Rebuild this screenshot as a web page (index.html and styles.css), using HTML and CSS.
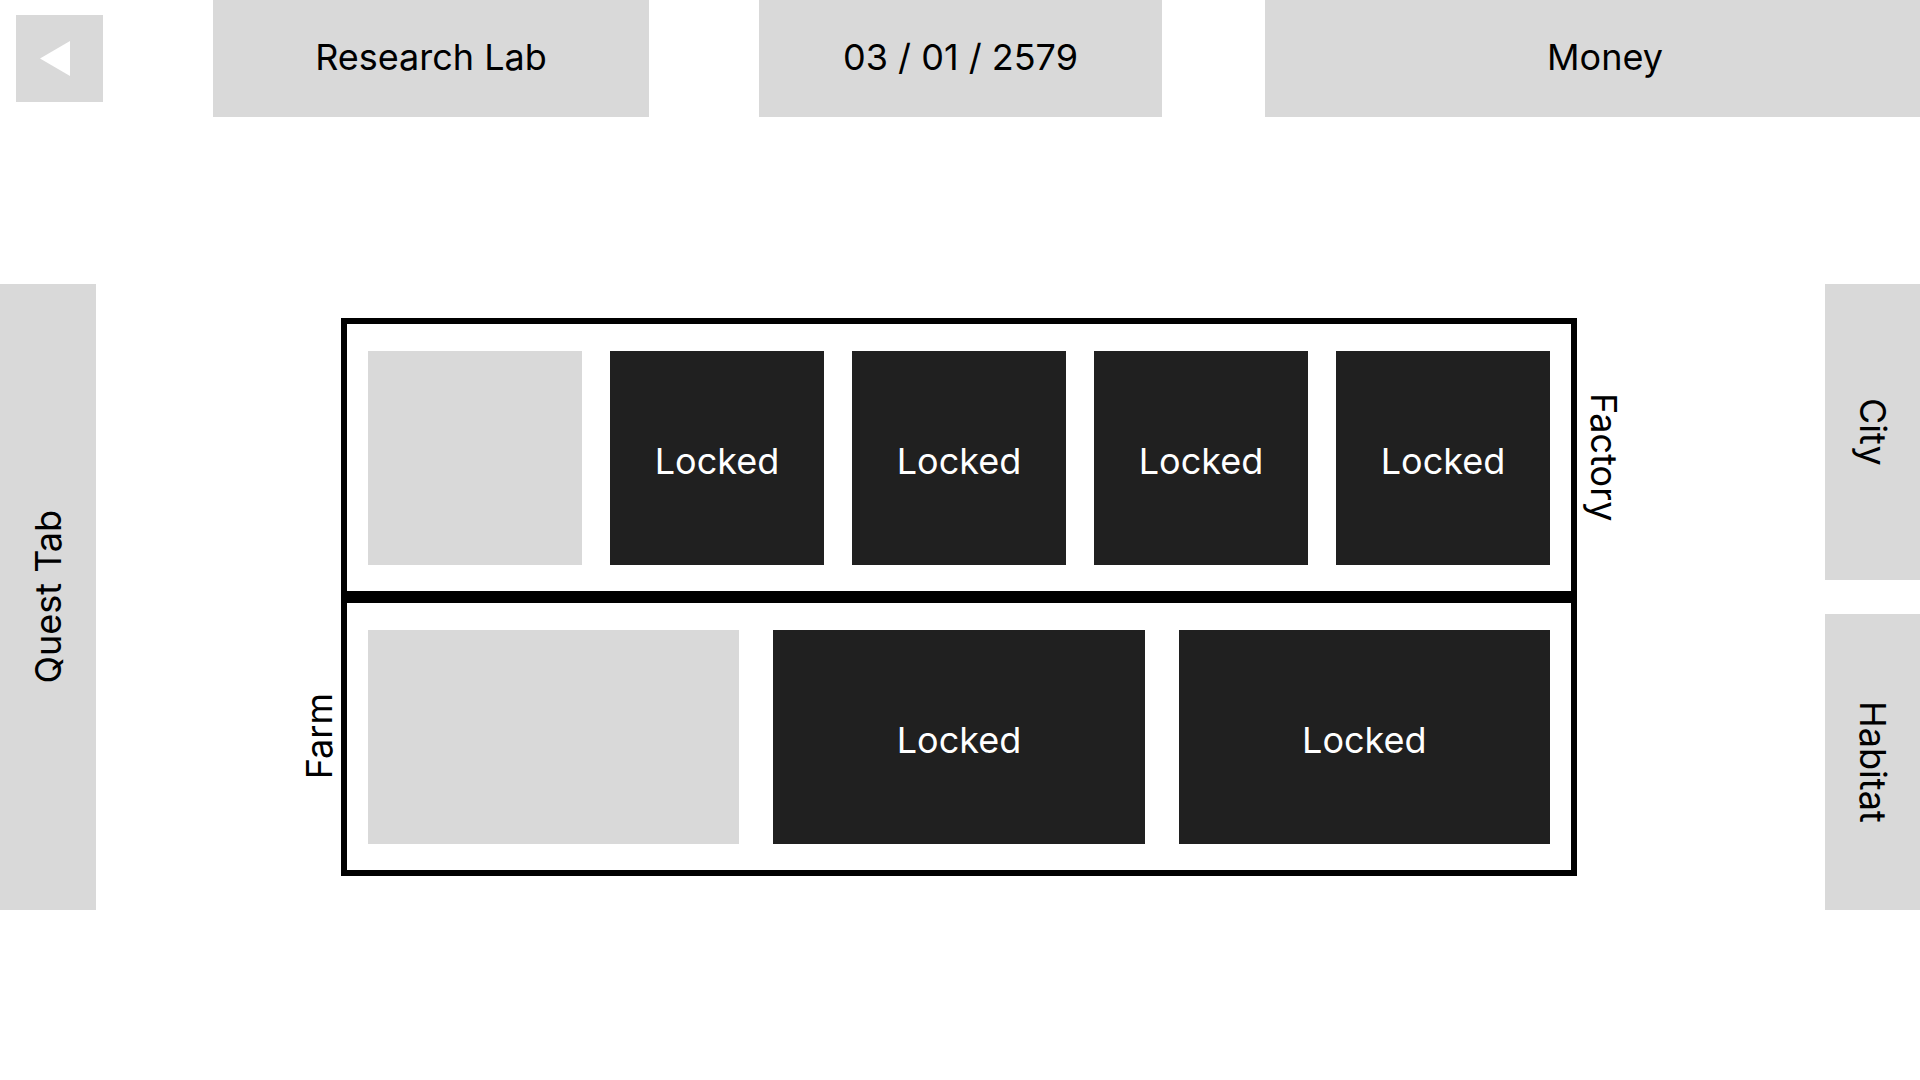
FILE: index.html
```html
<!DOCTYPE html>
<html lang="en">
<head>
<meta charset="utf-8">
<title>Research Lab</title>
<link rel="stylesheet" href="styles.css">
</head>
<body>
<div class="screen">
  <header class="topbar">
    <button class="back" aria-label="Back">
      <svg width="87" height="87" viewBox="0 0 87 87"><polygon points="24,43.5 54,26 54,61" fill="#ffffff"/></svg>
    </button>
    <div class="tab tab-title">Research Lab</div>
    <div class="tab tab-date">03 / 01 / 2579</div>
    <div class="tab tab-money">Money</div>
  </header>

  <main class="main">
    <aside class="side side-left"><span class="vlabel ccw">Quest Tab</span></aside>

    <section class="board">
      <div class="box box-factory">
        <div class="cell cell-open"></div>
        <div class="cell cell-locked">Locked</div>
        <div class="cell cell-locked">Locked</div>
        <div class="cell cell-locked">Locked</div>
        <div class="cell cell-locked">Locked</div>
      </div>
      <div class="label label-factory"><span class="vlabel cw">Factory</span></div>

      <div class="label label-farm"><span class="vlabel ccw">Farm</span></div>
      <div class="box box-farm">
        <div class="cell cell-open"></div>
        <div class="cell cell-locked">Locked</div>
        <div class="cell cell-locked">Locked</div>
      </div>
    </section>

    <aside class="side-right">
      <div class="side side-city"><span class="vlabel cw">City</span></div>
      <div class="side side-habitat"><span class="vlabel cw">Habitat</span></div>
    </aside>
  </main>
</div>
</body>
</html>
```

FILE: styles.css
```css
* { box-sizing: border-box; }

html, body {
  margin: 0;
  padding: 0;
  width: 1920px;
  height: 1080px;
  overflow: hidden;
  background: #ffffff;
}

body {
  font-family: Inter, "Noto Sans", sans-serif;
  font-size: 36px;
  color: #000000;
}

.screen {
  width: 1920px;
  height: 1080px;
  overflow: hidden;
}

/* ---------- top bar ---------- */
.topbar {
  display: flex;
  align-items: flex-start;
  height: 117px;
}

.back {
  margin: 15px 0 0 16px;
  width: 87px;
  height: 87px;
  padding: 0;
  border: 0;
  background: #d9d9d9;
  display: block;
  flex: none;
}
.back svg { display: block; }

.tab {
  flex: none;
  height: 117px;
  padding-bottom: 4px;
  background: #d9d9d9;
  display: flex;
  align-items: center;
  justify-content: center;
  white-space: nowrap;
}
.tab-title { margin-left: 110px; width: 436px; }
.tab-date  { margin-left: 110px; width: 403px; }
.tab-money { margin-left: 103px; width: 680px; }

/* ---------- main area ---------- */
.main {
  display: flex;
  align-items: flex-start;
  margin-top: 167px;
  width: 1920px;
}

.side {
  background: #d9d9d9;
  display: flex;
  align-items: center;
  justify-content: center;
}

.side-left {
  flex: none;
  width: 96px;
  height: 626px;
}

.side-right {
  flex: none;
  margin-left: auto;
  width: 95px;
  display: flex;
  flex-direction: column;
  gap: 34px;
}
.side-city,
.side-habitat {
  width: 95px;
  height: 296px;
}

.vlabel {
  writing-mode: vertical-rl;
  white-space: nowrap;
  line-height: normal;
}
.vlabel.ccw { transform: rotate(180deg); }

/* ---------- board ---------- */
.board {
  flex: none;
  margin-top: 34px;
  margin-left: 201px;
  display: grid;
  grid-template-columns: 44px 1236px 48px;
  grid-template-rows: 279px 279px;
}

.box {
  border: 6px solid #000000;
  display: flex;
  align-items: center;
  padding: 0 21px;
}
.box-factory { grid-column: 2; grid-row: 1; gap: 28px; }
.box-farm    { grid-column: 2; grid-row: 2; gap: 34px; }

.cell {
  height: 214px;
  padding-top: 7px;
  display: flex;
  align-items: center;
  justify-content: center;
  white-space: nowrap;
}
.box-factory .cell { width: 214px; flex: none; }
.box-farm .cell { flex: 1 1 0; }

.cell-open   { background: #d9d9d9; }
.cell-locked { background: #202020; color: #ffffff; }

.label {
  display: flex;
  align-items: center;
}
.label-factory { grid-column: 3; grid-row: 1; justify-content: flex-start; padding-left: 5px; }
.label-farm    { grid-column: 1; grid-row: 2; justify-content: flex-end; }
```
